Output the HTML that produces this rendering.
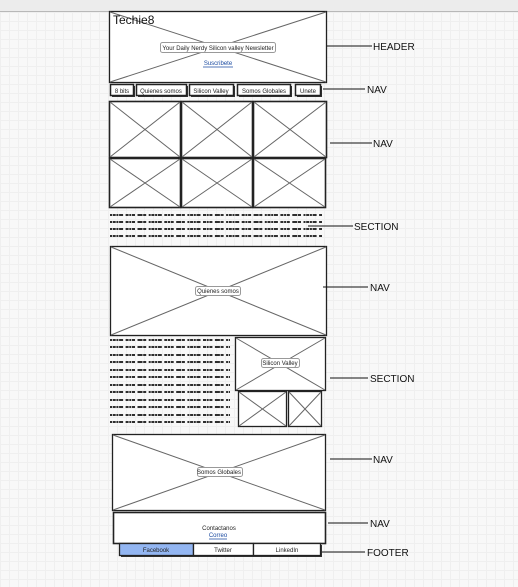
<!DOCTYPE html>
<html><head><meta charset="utf-8"><style>
html,body{margin:0;padding:0;width:518px;height:587px;overflow:hidden;}
body{background-color:#f8f8f8;background-image:linear-gradient(#efefef 1px,transparent 1px),linear-gradient(90deg,#efefef 1px,transparent 1px);background-size:9px 9px;background-position:0 3px;}
.top{position:absolute;left:0;top:0;width:518px;height:11px;background:#ececec;border-bottom:1px solid #b8b8b8;}
svg{position:absolute;left:0;top:0;}
text{font-family:"Liberation Sans",sans-serif;}
</style></head><body>
<div class="top"></div>
<svg width="518" height="587" viewBox="0 0 518 587">
<g fill="#333">
<rect x="112" y="86" width="23" height="11"/><rect x="138" y="86" width="50" height="11"/><rect x="191" y="86" width="44" height="11"/><rect x="239" y="86" width="53" height="11"/><rect x="297" y="86" width="25" height="11"/>
<rect x="121" y="545" width="201" height="12"/>
</g>
<g fill="#fff" stroke="#222" stroke-width="1.3">
<rect x="109.5" y="11.5" width="217" height="71"/>
<rect x="110.5" y="84.5" width="23" height="11" stroke-width="1.5"/>
<rect x="136.5" y="84.5" width="50" height="11" stroke-width="1.5"/>
<rect x="189.5" y="84.5" width="44" height="11" stroke-width="1.5"/>
<rect x="237.5" y="84.5" width="53" height="11" stroke-width="1.5"/>
<rect x="295.5" y="84.5" width="25" height="11" stroke-width="1.5"/>
<rect x="109.5" y="101.5" width="71" height="56" stroke-width="1.6"/>
<rect x="181.5" y="101.5" width="71" height="56" stroke-width="1.6"/>
<rect x="253.5" y="101.5" width="73" height="56" stroke-width="1.6"/>
<rect x="109.5" y="158.5" width="71" height="49" stroke-width="1.6"/>
<rect x="181.5" y="158.5" width="71" height="49" stroke-width="1.6"/>
<rect x="253.5" y="158.5" width="72" height="49" stroke-width="1.6"/>
<rect x="110.5" y="246.5" width="216" height="89"/>
<rect x="235.5" y="337.5" width="90" height="53"/>
<rect x="238.5" y="391.5" width="48" height="35"/>
<rect x="288.5" y="391.5" width="33" height="35"/>
<rect x="112.5" y="434.5" width="213" height="76"/>
<rect x="113.5" y="512.5" width="212" height="31" stroke-width="1.6"/>
<rect x="119.5" y="543.5" width="74" height="12" fill="#93b6f2"/>
<rect x="193.5" y="543.5" width="60" height="12"/>
<rect x="253.5" y="543.5" width="67" height="12"/>
</g>
<g stroke="#666" stroke-width="1">
<path d="M110 12L326 82M326 12L110 82"/>
<path d="M110 102L180 157M180 102L110 157M182 102L252 157M252 102L182 157M254 102L326 157M326 102L254 157"/>
<path d="M110 159L180 207M180 159L110 207M182 159L252 207M252 159L182 207M254 159L325 207M325 159L254 207"/>
<path d="M111 247L326 335M326 247L111 335"/>
<path d="M236 338L325 390M325 338L236 390"/>
<path d="M239 392L286 426M286 392L239 426M289 392L321 426M321 392L289 426"/>
<path d="M113 435L325 510M325 435L113 510"/>
</g>
<g font-size="6" fill="#222" text-anchor="middle">
<rect x="160.5" y="42.5" width="115" height="10" rx="2" fill="#fff" stroke="#999"/>
<text x="218" y="50">Your Daily Nerdy Silicon valley Newsletter</text>
<text x="218" y="65" fill="#1a4aa0">Suscribete</text>
<line x1="203" y1="67" x2="233" y2="67" stroke="#1a4aa0" stroke-width="0.8"/>
<text x="122" y="93">8 bits</text>
<text x="161" y="93">Quienes somos</text>
<text x="211" y="93">Silicon Valley</text>
<text x="264" y="93">Somos Globales</text>
<text x="308" y="93">Unete</text>
<rect x="195.5" y="286.5" width="45" height="9" rx="2" fill="#fff" stroke="#999"/>
<text x="218" y="293">Quienes somos</text>
<rect x="261.5" y="358.5" width="38" height="9" rx="2" fill="#fff" stroke="#999"/>
<text x="280" y="365">Silicon Valley</text>
<rect x="197.5" y="467.5" width="45" height="9" rx="2" fill="#fff" stroke="#999"/>
<text x="219" y="474">Somos Globales</text>
<text x="219" y="530">Contactanos</text>
<text x="218" y="537" fill="#1a4aa0">Correo</text>
<line x1="209" y1="539" x2="227" y2="539" stroke="#1a4aa0" stroke-width="0.8"/>
<text x="156" y="552">Facebook</text>
<text x="223" y="552">Twitter</text>
<text x="287" y="552">LinkedIn</text>
</g>
<text x="113" y="24" font-size="12" fill="#111">Techie8</text>
<g stroke="#111" stroke-width="1.8" stroke-dasharray="2 0.7 3 0.7 2 0.7 4 2.5 3 0.7 2 0.7 3 2.5 5 0.7 3 2.5">
<path d="M110 215H322M110 222H322M110 229H322M110 236H322"/>
<path d="M110 340H230M110 347H230M110 355H230M110 362H230M110 370H230M110 377H230M110 385H230M110 392H230M110 400H230M110 407H230M110 415H230M110 422H230"/>
</g>
<g stroke="#111" stroke-width="1">
<path d="M327 46H372M323 89H365M330 143H372M308 226H353M323 287H368M330 378H368M330 459H372M328 523H368M322 552H365"/>
</g>
<g font-size="10" fill="#111">
<text x="373" y="50">HEADER</text>
<text x="367" y="93">NAV</text>
<text x="373" y="147">NAV</text>
<text x="354" y="230">SECTION</text>
<text x="370" y="291">NAV</text>
<text x="370" y="382">SECTION</text>
<text x="373" y="463">NAV</text>
<text x="370" y="527">NAV</text>
<text x="367" y="556">FOOTER</text>
</g>
</svg>
</body></html>
